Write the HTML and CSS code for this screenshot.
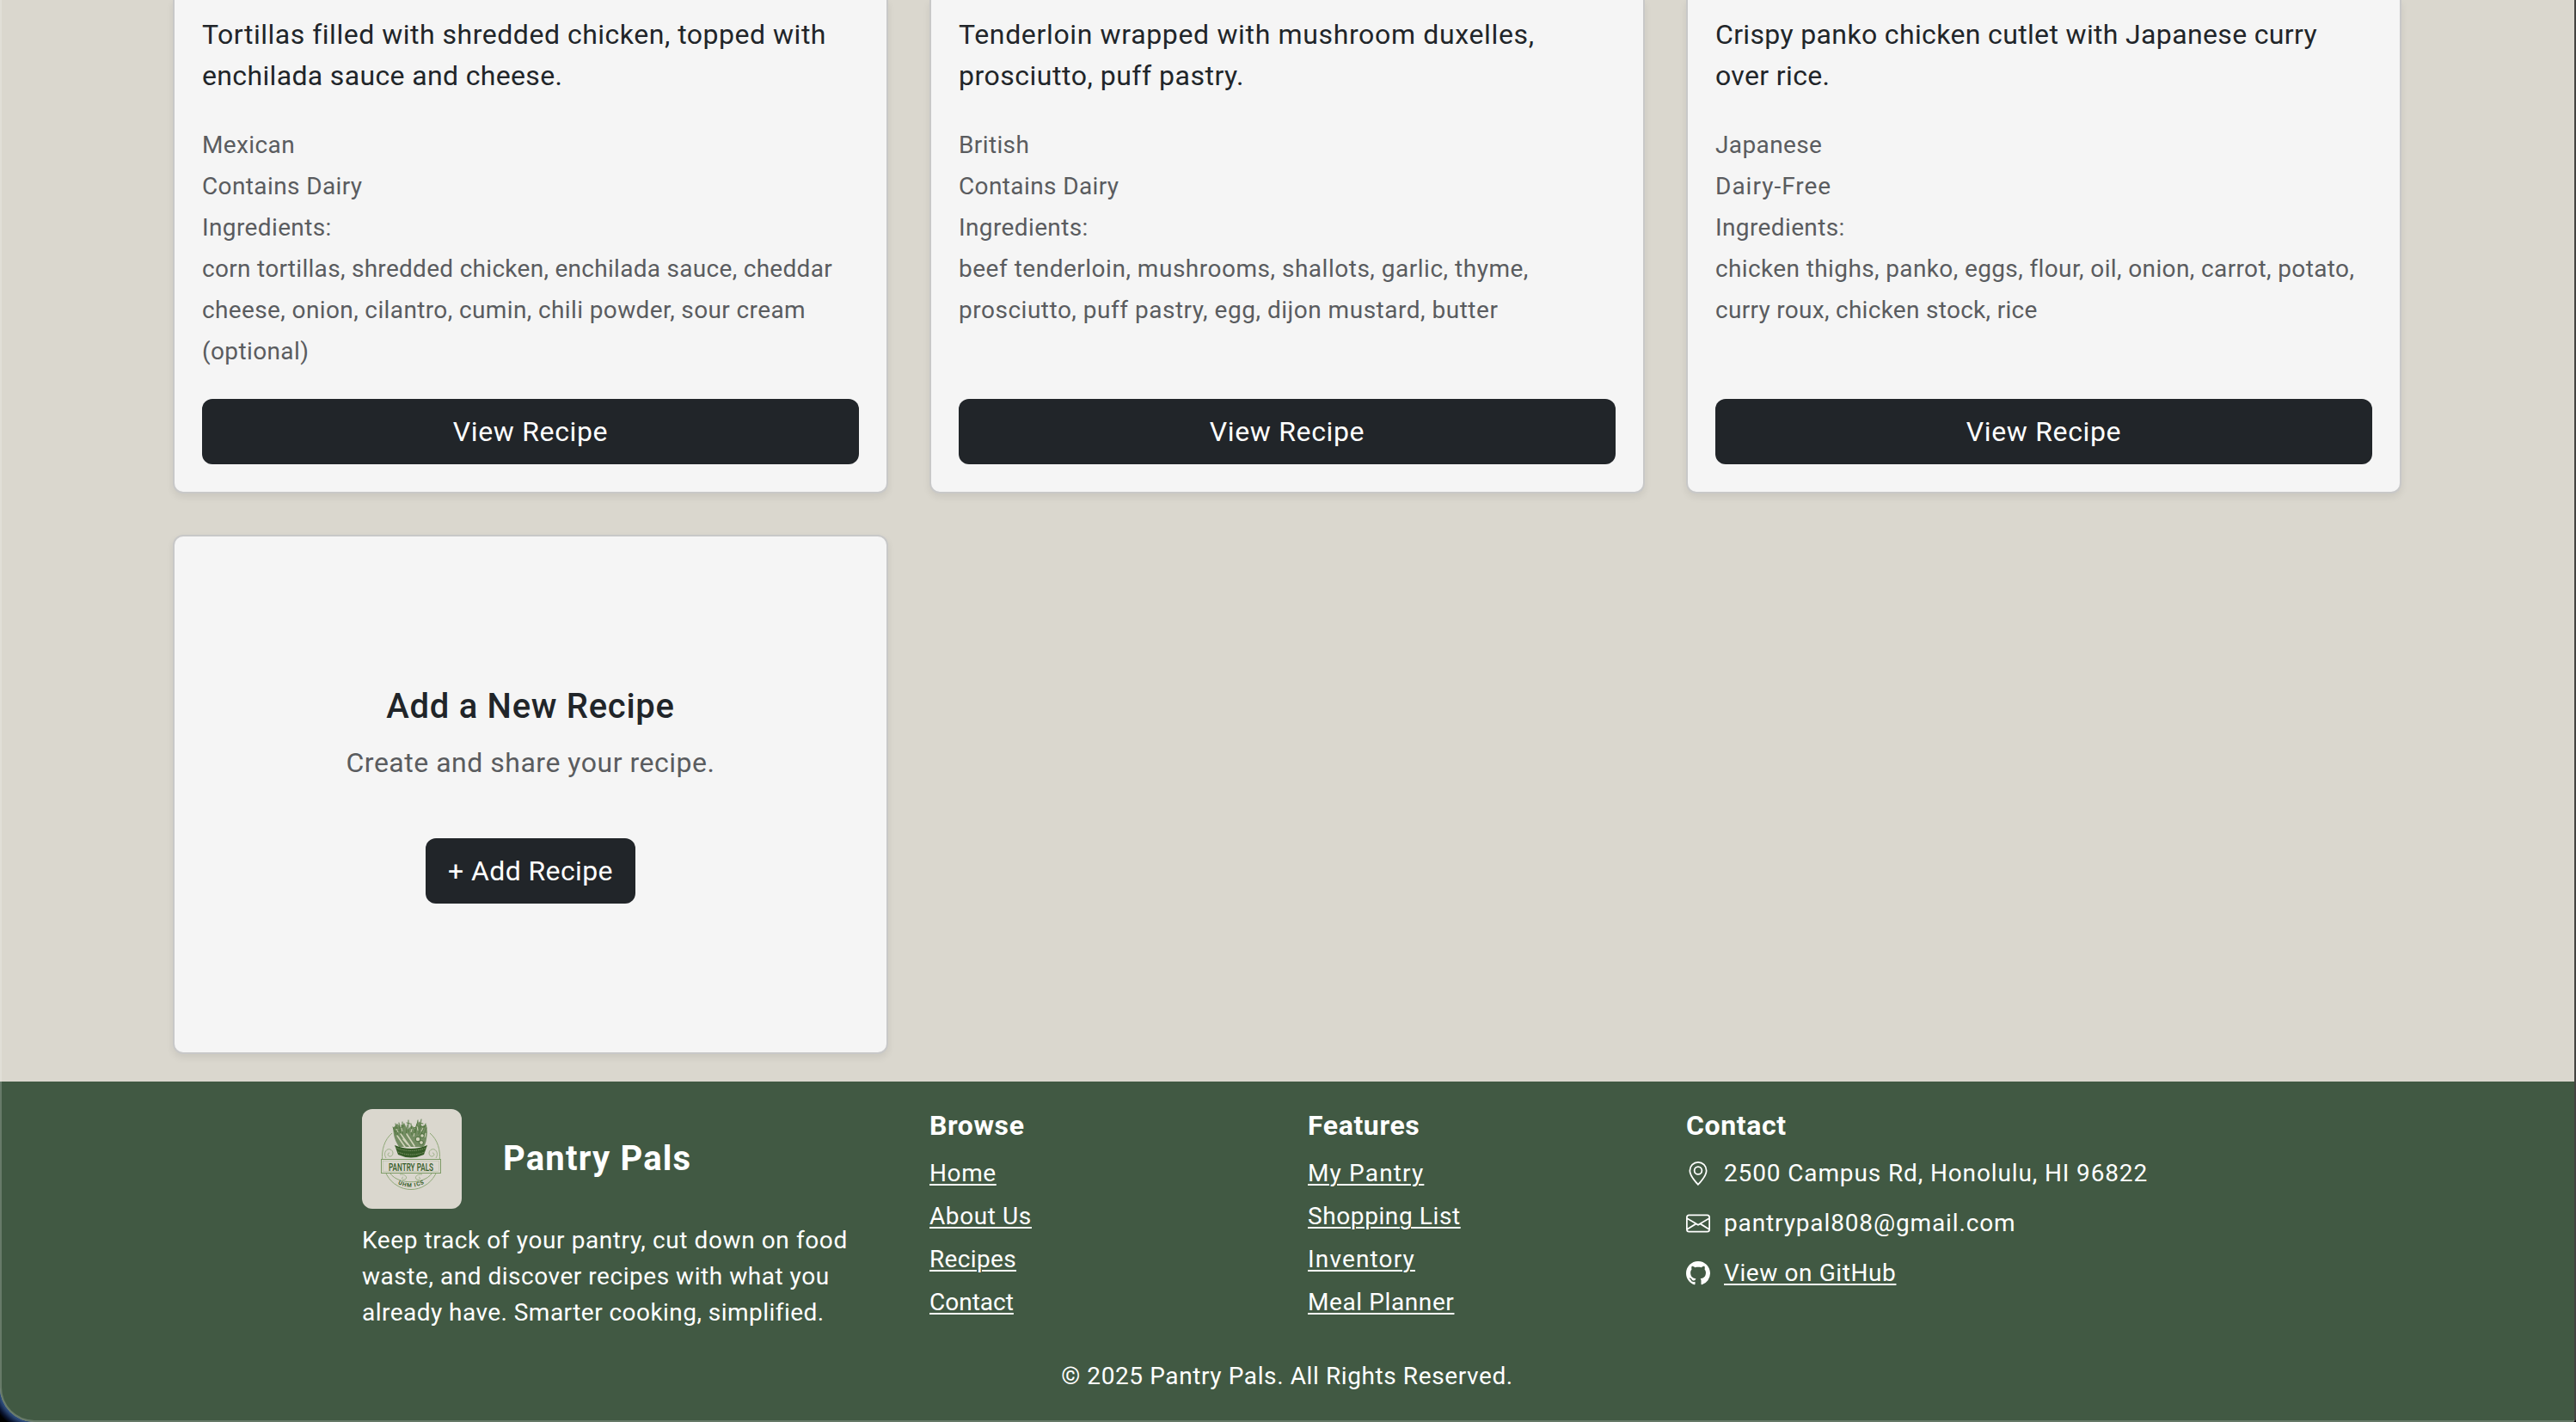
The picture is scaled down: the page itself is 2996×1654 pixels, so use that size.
FILE: index.html
```html
<!DOCTYPE html>
<html lang="en">
<head>
<meta charset="utf-8">
<title>Pantry Pals</title>
<link rel="stylesheet" href="styles.css">
</head>
<body>
<div class="window">
  <main class="recipes">
    <article class="card card-recipe">
      <p class="desc">Tortillas filled with shredded chicken, topped with<br><span class="snug">enchilada sauce and cheese.</span></p>
      <div class="meta">
        <p>Mexican</p><p>Contains Dairy</p><p>Ingredients:</p>
        <p><span class="snug-sm">corn tortillas, shredded chicken, enchilada sauce, cheddar</span><br>cheese, onion, cilantro, cumin, chili powder, sour cream<br>(optional)</p>
      </div>
      <a class="btn btn-block">View Recipe</a>
    </article>
    <article class="card card-recipe">
      <p class="desc"><span class="loose">Tenderloin wrapped with mushroom duxelles,</span><br>prosciutto, puff pastry.</p>
      <div class="meta">
        <p>British</p><p>Contains Dairy</p><p>Ingredients:</p>
        <p class="loose-sm">beef tenderloin, mushrooms, shallots, garlic, thyme,<br>prosciutto, puff pastry, egg, dijon mustard, butter</p>
      </div>
      <a class="btn btn-block">View Recipe</a>
    </article>
    <article class="card card-recipe">
      <p class="desc snug">Crispy panko chicken cutlet with Japanese curry<br>over rice.</p>
      <div class="meta">
        <p>Japanese</p><p class="loose-md">Dairy-Free</p><p>Ingredients:</p>
        <p>chicken thighs, panko, eggs, flour, oil, onion, carrot, potato,<br><span class="snug-sm">curry roux, chicken stock, rice</span></p>
      </div>
      <a class="btn btn-block">View Recipe</a>
    </article>
    <article class="card card-add">
      <h5 class="add-title">Add a New Recipe</h5>
      <p class="add-text">Create and share your recipe.</p>
      <a class="btn btn-add">+ Add Recipe</a>
    </article>
  </main>
  <footer class="footer">
    <div class="footer-grid">
      <section>
        <div class="brand">
          <svg class="logo" viewBox="0 0 116 116">
            <g fill="none" stroke="#8fa878" stroke-width="1">
              <path d="M35 28C17 43 21 78 41 89C50 95 64 95 73 89C93 78 97 43 79 28"/>
              <path d="M33 75C42 88 72 88 81 75"/>
              <path d="M28 57C24 51 29 45 33 47C38 49 36 56 32 55C29 54 30 51 32 51M86 57C90 51 85 45 81 47C76 49 78 56 82 55C85 54 84 51 82 51" stroke-width=".8"/>
              <path d="M44 76C50 75 54 80 50 82C47 83 45 80 48 79M70 76C64 75 60 80 64 82C67 83 69 80 66 79" stroke-width=".8"/>
            </g>
            <g stroke="#5b7d4a" fill="none" stroke-width="1" stroke-linecap="round">
              <path d="M41 32L36 21M42 31L39 17M45 31L43 16M47 29L47 15M51 30L53 18M54 27L54 13M58 30L57 17M60 29L64 17M62 29L65 13M66 29L69 12M69 29L74 17M71 32L75 22M38 26L44 25M37 22L42 22M60 22L66 20M67 21L73 20M67 16L71 17M52 16L56 17M45 19L49 20"/>
            </g>
            <path d="M36 22L41 17L45 21L49 16L53 24L58 19L62 23L66 14L70 20L75 18L76 27L75 35Q74 42 71 44L43 44Q38 36 37 30Z" fill="#52743f" fill-opacity=".75"/>
            <path d="M41 31L50 44M45 29L56 44M52 29L61 43M48 35L53 41" stroke="#cfd2b9" stroke-width="1.6" stroke-linecap="round"/>
            <path d="M40 23L42 27M46 22L47 26M58 23L57 27M64 20L65 25M71 22L69 26M61 28L60 32M74 28L73 33" stroke="#cfd2b9" stroke-width="1"/>
            <g fill="#cfd2b9" stroke="#365c28" stroke-width=".8"><circle cx="65" cy="35" r="2.800"/><circle cx="70" cy="31" r="2.300"/><circle cx="69" cy="39" r="2.400"/></g>
            <path d="M38 42Q57 50 76 42L72 53Q57 60 42 53Z" fill="#365c28"/>
            <path d="M39 45Q57 52 75 45M42 50Q57 56 73 50" fill="none" stroke="#8ea276" stroke-width=".9" stroke-dasharray="1.4 1"/>
            <rect x="22.5" y="58.500" width="69" height="16" fill="#dad7ce" stroke="#7f9c68"/>
            <rect x="24.300" y="60.300" width="65.400" height="12.400" fill="none" stroke="#b4c0a0" stroke-width=".5"/>
            <text class="logo-name" x="31" y="71.500" textLength="52" lengthAdjust="spacingAndGlyphs">PANTRY PALS</text>
            <path id="arc" d="M40 86Q57 96 75 85" fill="none"/>
            <text class="logo-sub"><textPath href="#arc" startOffset="2" textLength="32">UHM ICS</textPath></text>
          </svg>
          <h4 class="brand-name">Pantry Pals</h4>
        </div>
        <p class="about">Keep track of your pantry, cut down on food<br><span class="about-mid">waste, and discover recipes with what you</span><br><span class="about-end">already have. Smarter cooking, simplified.</span></p>
      </section>
      <section>
        <h5 class="heading">Browse</h5>
        <ul class="links"><li><a>Home</a></li><li><a>About Us</a></li><li><a class="snug">Recipes</a></li><li><a class="tight">Contact</a></li></ul>
      </section>
      <section>
        <h5 class="heading">Features</h5>
        <ul class="links"><li><a class="wide">My Pantry</a></li><li><a>Shopping List</a></li><li><a class="wide">Inventory</a></li><li><a>Meal Planner</a></li></ul>
      </section>
      <section>
        <h5 class="heading">Contact</h5>
        <ul class="contact">
          <li><svg class="icon" viewBox="0 0 16 16"><path d="M12.166 8.940c-.524 1.062-1.234 2.120-1.960 3.070A32 32 0 0 1 8 14.580a32 32 0 0 1-2.206-2.570c-.726-.950-1.436-2.008-1.960-3.070C3.304 7.867 3 6.862 3 6a5 5 0 0 1 10 0c0 .862-.305 1.867-.834 2.940M8 16s6-5.686 6-10A6 6 0 0 0 2 6c0 4.314 6 10 6 10"/><path d="M8 8a2 2 0 1 1 0-4 2 2 0 0 1 0 4m0 1a3 3 0 1 0 0-6 3 3 0 0 0 0 6"/></svg><span class="address">2500 Campus Rd, Honolulu, HI 96822</span></li>
          <li><svg class="icon" viewBox="0 0 16 16"><path d="M0 4a2 2 0 0 1 2-2h12a2 2 0 0 1 2 2v8a2 2 0 0 1-2 2H2a2 2 0 0 1-2-2zm2-1a1 1 0 0 0-1 1v.217l7 4.200 7-4.200V4a1 1 0 0 0-1-1zm13 2.383-4.708 2.825L15 11.105zm-.034 6.876-5.640-3.471L8 9.583l-1.326-.795-5.640 3.470A1 1 0 0 0 2 13h12a1 1 0 0 0 .966-.741M1 11.105l4.708-2.897L1 5.383z"/></svg><span class="address">pantrypal808@gmail.com</span></li>
          <li><svg class="icon" viewBox="0 0 16 16"><path d="M8 0C3.580 0 0 3.580 0 8c0 3.540 2.290 6.530 5.470 7.590.4.070.55-.17.55-.38 0-.19-.010-.82-.010-1.490-2.010.37-2.530-.49-2.690-.94-.090-.23-.48-.94-.82-1.130-.28-.15-.68-.52-.010-.53.63-.010 1.080.58 1.230.82.72 1.210 1.870.87 2.330.66.070-.52.28-.87.51-1.070-1.780-.2-3.640-.89-3.640-3.950 0-.87.31-1.590.82-2.150-.080-.2-.36-1.020.080-2.120 0 0 .67-.21 2.200.82.64-.18 1.320-.27 2-.27s1.360.090 2 .27c1.530-1.040 2.200-.82 2.200-.82.44 1.100.16 1.920.080 2.120.51.56.82 1.270.82 2.150 0 3.070-1.870 3.750-3.650 3.950.29.25.54.73.54 1.480 0 1.070-.010 1.930-.010 2.200 0 .21.15.46.55.38A8.010 8.010 0 0 0 16 8c0-4.420-3.580-8-8-8"/></svg><a>View on GitHub</a></li>
        </ul>
      </section>
    </div>
    <p class="copyright">© 2025 Pantry Pals. All Rights Reserved.</p>
  </footer>
</div>
</body>
</html>
```
FILE: styles.css
```css
* { box-sizing: border-box; margin: 0; padding: 0; }

body {
  background: radial-gradient(circle at 42px 1612px, #2c4a78 44px, #0a1430 50px, #000 54px);
  color: #212529;
  font: 400 32px/48px Roboto, "Noto Sans", sans-serif;
  letter-spacing: .51px;
  overflow: hidden;
}

.window {
  position: relative;
  display: flex;
  flex-direction: column;
  width: 2996px;
  height: 1654px;
  border-right: 2px solid #444442;
  border-bottom-left-radius: 40px;
  border-bottom-right-radius: 4px;
  background: #dad7ce;
  overflow: hidden;
}

/* light rim along the window's left and bottom edges */
.window::after {
  content: "";
  position: absolute;
  inset: 0;
  border-left: 2px solid rgba(255, 255, 255, .2);
  border-bottom: 2px solid rgba(255, 255, 255, .2);
  border-bottom-left-radius: 40px;
  pointer-events: none;
}

.recipes {
  display: grid;
  grid-template-columns: repeat(3, 832px);
  grid-template-rows: 574px 604px;
  gap: 48px;
  height: 1258px;
  padding-left: 201px;
}

.card {
  display: flex;
  flex-direction: column;
  border: 2px solid #c8c8c8;
  border-radius: 12px;
  background: #f5f5f5;
  box-shadow: 0 4px 8px rgba(0, 0, 0, .075);
}

.card-recipe {
  padding: 16px 32px 32px;
  border-top: 0;
  border-top-left-radius: 0;
  border-top-right-radius: 0;
}

.snug { letter-spacing: .35px; }
.snug-sm { letter-spacing: .29px; }
.loose { letter-spacing: .65px; }
.loose-sm { letter-spacing: .51px; }
.loose-md { letter-spacing: 1px; }

.meta {
  margin-top: 33px;
  color: #5a5c5f;
  font-size: 28px;
  letter-spacing: .38px;
}

.btn {
  height: 76px;
  border-radius: 12px;
  background: #212529;
  color: #fff;
  line-height: 76px;
  text-align: center;
}

.btn-block { margin-top: auto; letter-spacing: .65px; }

.card-add { align-items: center; justify-content: center; }
.add-title { margin-bottom: 17px; font-size: 40px; font-weight: 500; letter-spacing: .7px; }
.add-text { margin-bottom: 64px; color: #5a5c5f; }
.btn-add { width: 244px; letter-spacing: .4px; }

.footer {
  height: 396px;
  padding-top: 32px;
  background: #415943;
  color: #fff;
  font-size: 28px;
  line-height: 42px;
  letter-spacing: .6px;
}

.footer-grid {
  display: grid;
  grid-template-columns: 660px 440px 440px 1fr;
  height: 290px;
  padding-left: 421px;
}

.brand { display: flex; align-items: center; gap: 48px; margin-bottom: 16px; }
.logo { width: 116px; height: 116px; border-radius: 12px; background: #dad7ce; }
.logo-name { fill: #365c28; font: 500 13.500px Roboto, sans-serif; letter-spacing: 0; }
.logo-sub { fill: #365c28; font: 700 6.500px Roboto, sans-serif; letter-spacing: 0; }
.brand-name { font-size: 40px; font-weight: 700; letter-spacing: 1.200px; }
.about-mid { letter-spacing: .53px; }
.about-end { letter-spacing: .46px; }

.heading { margin-bottom: 16px; font-size: 32px; font-weight: 700; line-height: 38.400px; }

ul { list-style: none; }
.links li { margin-bottom: 8px; }
.tight { letter-spacing: 0; }
.wide { letter-spacing: 1.150px; }
.footer a { text-decoration: underline; text-decoration-thickness: 2px; text-underline-offset: 3px; }

.contact li { display: flex; align-items: center; gap: 16px; margin-bottom: 16px; }
.icon { width: 28px; height: 28px; fill: #fff; }
.address { letter-spacing: .87px; }

.copyright { text-align: center; }
```
